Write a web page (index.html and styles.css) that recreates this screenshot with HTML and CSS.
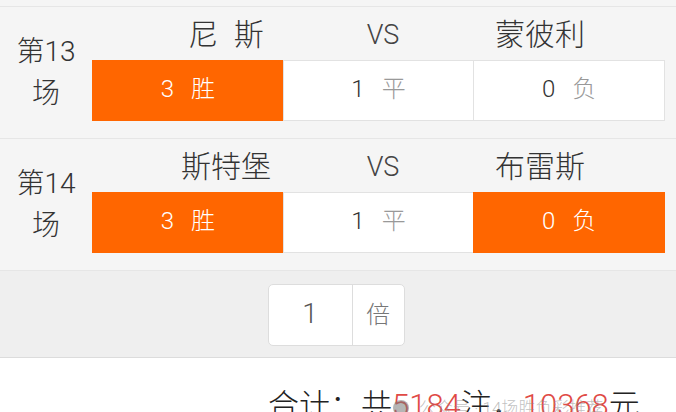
FILE: index.html
```html
<!DOCTYPE html>
<html lang="zh-CN">
<head>
    <meta charset="UTF-8">
    <meta name="viewport" content="width=device-width, initial-scale=1.0">
    <title>胜负彩选号</title>
    <link rel="stylesheet" href="styles.css">
</head>
<body>
    <div class="top-gap"></div>

    <div class="match">
        <div class="match-no">第13场</div>
        <div class="match-body">
            <div class="teams">
                <span>尼&ensp;斯</span>
                <span class="vs">VS</span>
                <span>蒙彼利</span>
            </div>
            <div class="options">
                <div class="opt on"><span class="num">3</span><span class="label">胜</span></div>
                <div class="opt"><span class="num">1</span><span class="label">平</span></div>
                <div class="opt"><span class="num">0</span><span class="label">负</span></div>
            </div>
        </div>
    </div>

    <div class="match">
        <div class="match-no">第14场</div>
        <div class="match-body">
            <div class="teams">
                <span>斯特堡</span>
                <span class="vs">VS</span>
                <span>布雷斯</span>
            </div>
            <div class="options">
                <div class="opt on"><span class="num">3</span><span class="label">胜</span></div>
                <div class="opt"><span class="num">1</span><span class="label">平</span></div>
                <div class="opt on"><span class="num">0</span><span class="label">负</span></div>
            </div>
        </div>
    </div>

    <div class="multiple">
        <div class="multiple-box">
            <div class="multiple-input">1</div>
            <div class="multiple-unit">倍</div>
        </div>
    </div>

    <div class="summary">
        合计：共<span class="red">5184</span>注，<span class="red">10368</span>元
        <div class="watermark">
            <span class="wm-icon"></span>公众号 · 14场胜负彩推荐
        </div>
    </div>
</body>
</html>
```

FILE: styles.css
```css
body {
    margin: 0;
    background-color: #fff;
    font-family: Roboto, "Noto Sans CJK SC", sans-serif;
    font-weight: 300;
    color: #333;
    overflow: hidden;
}
.top-gap {
    height: 6px;
    background-color: #f5f5f5;
    border-bottom: 1px solid #e6e6e6;
}
.match {
    display: flex;
    align-items: center;
    height: 131px;
    background-color: #f5f5f5;
    border-bottom: 1px solid #e6e6e6;
}
.match-no {
    width: 92px;
    padding: 0 6px;
    box-sizing: border-box;
    font-size: 28px;
    line-height: 42px;
    text-align: center;
}
.match-body {
    width: 573px;
    align-self: flex-start;
}
.teams {
    display: grid;
    grid-template-columns: repeat(3, 157px);
    justify-content: center;
    padding: 10px 0 0 9px;
    margin-bottom: 7px;
    font-size: 30px;
    line-height: 36px;
    text-align: center;
}
.teams .vs {
    font-size: 27px;
    color: #444;
}
.options {
    display: flex;
}
.opt {
    flex: 1;
    height: 61px;
    box-sizing: border-box;
    border: 1px solid #e2e2e2;
    margin-left: -1px;
    background-color: #fff;
    font-size: 24px;
    line-height: 57px;
    text-align: center;
}
.opt:first-child {
    margin-left: 0;
}
.opt .num {
    margin-right: 17px;
    color: #333;
}
.opt .label {
    color: #999;
}
.opt.on {
    background-color: #ff6600;
    border-color: #ff6600;
}
.opt.on .num,
.opt.on .label {
    color: #fff;
}
.multiple {
    display: flex;
    justify-content: center;
    padding: 13px 0 11px;
    background-color: #efefef;
    border-bottom: 1px solid #dcdcdc;
}
.multiple-box {
    display: flex;
    height: 62px;
    margin-right: 4px;
    border: 1px solid #ddd;
    border-radius: 5px;
    background-color: #fff;
    box-sizing: border-box;
}
.multiple-input {
    width: 83px;
    border-right: 1px solid #ddd;
    font-size: 28px;
    line-height: 58px;
    text-align: center;
    color: #555;
}
.multiple-unit {
    width: 51px;
    font-size: 24px;
    line-height: 60px;
    text-align: center;
    color: #777;
}
.summary {
    position: relative;
    padding: 30px 0 0 268px;
    font-size: 31px;
    line-height: 36px;
    white-space: nowrap;
    color: #222;
}
.summary .red {
    color: #e04a45;
}
.watermark {
    position: absolute;
    left: 393px;
    top: 40px;
    display: flex;
    align-items: center;
    font-size: 17px;
    line-height: 20px;
    color: rgba(140, 140, 140, 0.55);
}
.wm-icon {
    width: 16px;
    height: 16px;
    margin-right: 10px;
    border-radius: 50%;
    background-color: rgba(120, 120, 120, 0.55);
}
```
